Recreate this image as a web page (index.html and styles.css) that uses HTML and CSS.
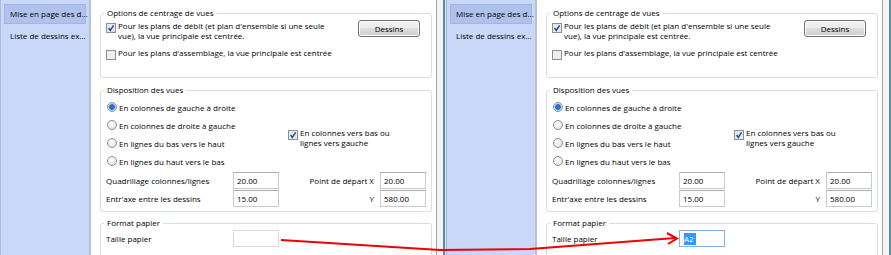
FILE: index.html
```html
<!DOCTYPE html>
<html lang="fr">
<head>
    <meta charset="UTF-8">
    <title>Mise en page des dessins</title>
    <link rel="stylesheet" href="styles.css">
</head>
<body>
<div class="screens">

    <!-- before -->
    <div class="window">
        <div class="sidebar">
            <div class="nav-item active">Mise en page des d...</div>
            <div class="nav-item">Liste de dessins ex...</div>
        </div>
        <div class="main">
            <fieldset class="group">
                <legend>Options de centrage de vues</legend>
                <div class="center-body">
                    <div class="checks">
                        <div class="check-row">
                            <svg class="box" viewBox="0 0 10 10"><rect x="0.5" y="0.5" width="9" height="9" fill="#e4e9f0" stroke="#8e8f8f"/><path d="M2.6 5 L4.3 7.4 L7.6 2.4" fill="none" stroke="#23468c" stroke-width="1.4"/></svg>
                            <span>Pour les plans de débit (et plan d'ensemble si une seule<br>vue), la vue principale est centrée.</span>
                        </div>
                        <div class="check-row second">
                            <svg class="box" viewBox="0 0 10 10"><rect x="0.5" y="0.5" width="9" height="9" fill="#eeeeee" stroke="#8e8f8f"/></svg>
                            <span>Pour les plans d'assemblage, la vue principale est centrée</span>
                        </div>
                    </div>
                    <button class="btn">Dessins</button>
                </div>
            </fieldset>

            <fieldset class="group layout">
                <legend>Disposition des vues</legend>
                <div class="radio-grid">
                    <div class="radio-row"><span class="radio on"></span>En colonnes de gauche à droite</div>
                    <div class="radio-row"><span class="radio"></span>En colonnes de droite à gauche</div>
                    <div class="radio-row"><span class="radio"></span>En lignes du bas vers le haut</div>
                    <div class="radio-row"><span class="radio"></span>En lignes du haut vers le bas</div>
                    <div class="check-row side">
                        <svg class="box" viewBox="0 0 10 10"><rect x="0.5" y="0.5" width="9" height="9" fill="#e4e9f0" stroke="#8e8f8f"/><path d="M2.6 5 L4.3 7.4 L7.6 2.4" fill="none" stroke="#23468c" stroke-width="1.4"/></svg>
                        <span>En colonnes vers bas ou<br>lignes vers gauche</span>
                    </div>
                </div>
                <div class="fields">
                    <span class="lbl">Quadrillage colonnes/lignes</span>
                    <span class="field">20.00</span>
                    <span class="lbl right">Point de départ X</span>
                    <span class="field">20.00</span>
                    <span class="lbl">Entr'axe entre les dessins</span>
                    <span class="field">15.00</span>
                    <span class="lbl right">Y</span>
                    <span class="field">580.00</span>
                </div>
            </fieldset>

            <fieldset class="group paper">
                <legend>Format papier</legend>
                <div class="fields">
                    <span class="lbl">Taille papier</span>
                    <span class="field empty"></span>
                </div>
            </fieldset>
        </div>
        <div class="frame"></div>
    </div>

    <!-- after -->
    <div class="window">
        <div class="sidebar">
            <div class="nav-item active">Mise en page des d...</div>
            <div class="nav-item">Liste de dessins ex...</div>
        </div>
        <div class="main">
            <fieldset class="group">
                <legend>Options de centrage de vues</legend>
                <div class="center-body">
                    <div class="checks">
                        <div class="check-row">
                            <svg class="box" viewBox="0 0 10 10"><rect x="0.5" y="0.5" width="9" height="9" fill="#e4e9f0" stroke="#8e8f8f"/><path d="M2.6 5 L4.3 7.4 L7.6 2.4" fill="none" stroke="#23468c" stroke-width="1.4"/></svg>
                            <span>Pour les plans de débit (et plan d'ensemble si une seule<br>vue), la vue principale est centrée.</span>
                        </div>
                        <div class="check-row second">
                            <svg class="box" viewBox="0 0 10 10"><rect x="0.5" y="0.5" width="9" height="9" fill="#eeeeee" stroke="#8e8f8f"/></svg>
                            <span>Pour les plans d'assemblage, la vue principale est centrée</span>
                        </div>
                    </div>
                    <button class="btn">Dessins</button>
                </div>
            </fieldset>

            <fieldset class="group layout">
                <legend>Disposition des vues</legend>
                <div class="radio-grid">
                    <div class="radio-row"><span class="radio on"></span>En colonnes de gauche à droite</div>
                    <div class="radio-row"><span class="radio"></span>En colonnes de droite à gauche</div>
                    <div class="radio-row"><span class="radio"></span>En lignes du bas vers le haut</div>
                    <div class="radio-row"><span class="radio"></span>En lignes du haut vers le bas</div>
                    <div class="check-row side">
                        <svg class="box" viewBox="0 0 10 10"><rect x="0.5" y="0.5" width="9" height="9" fill="#e4e9f0" stroke="#8e8f8f"/><path d="M2.6 5 L4.3 7.4 L7.6 2.4" fill="none" stroke="#23468c" stroke-width="1.4"/></svg>
                        <span>En colonnes vers bas ou<br>lignes vers gauche</span>
                    </div>
                </div>
                <div class="fields">
                    <span class="lbl">Quadrillage colonnes/lignes</span>
                    <span class="field">20.00</span>
                    <span class="lbl right">Point de départ X</span>
                    <span class="field">20.00</span>
                    <span class="lbl">Entr'axe entre les dessins</span>
                    <span class="field">15.00</span>
                    <span class="lbl right">Y</span>
                    <span class="field">580.00</span>
                </div>
            </fieldset>

            <fieldset class="group paper">
                <legend>Format papier</legend>
                <div class="fields">
                    <span class="lbl">Taille papier</span>
                    <span class="field focus"><span class="sel">A2</span></span>
                </div>
            </fieldset>
        </div>
        <div class="frame"></div>
    </div>

    <!-- red annotation arrow -->
    <svg class="arrow" width="891" height="255" viewBox="0 0 891 255">
        <polyline points="281,240 440,250 530,249 675,238" fill="none" stroke="#f00000" stroke-width="2"/>
        <polyline points="667,233 677,238.5 668,244" fill="none" stroke="#f00000" stroke-width="2"/>
    </svg>
</div>
</body>
</html>
```

FILE: styles.css
```css
body {
    margin: 0;
    width: 891px;
    height: 255px;
    overflow: hidden;
    font-family: "Open Sans", "Segoe UI", sans-serif;
    font-size: 8px;
    color: #000000;
    background: #ffffff;
}
.screens {
    position: relative;
    display: flex;
    height: 255px;
}
.window {
    flex: 0 0 446px;
    display: flex;
    height: 255px;
}

/* left navigation */
.sidebar {
    box-sizing: border-box;
    width: 91px;
    padding: 4px 3px 0 3px;
    background: #c9d8f8;
    border-left: 1px solid #a8badf;
    border-right: 2px solid #b7c1cf;
}
.nav-item {
    height: 20px;
    line-height: 20px;
    padding-left: 6px;
    margin-bottom: 2px;
    white-space: nowrap;
}
.nav-item.active {
    background: #afc2ec;
    box-shadow: inset 0 0 0 1px #a2b6e2;
}

/* content area */
.main {
    box-sizing: border-box;
    width: 345px;
    padding-top: 7px;
    background: #ffffff;
}
.frame {
    width: 10px;
    background: linear-gradient(to right, #a3a3a3 0 1px, #f4f4f4 1px 7px, #5c8ea8 7px 9px, #d8e3f1 9px 10px);
}

.group {
    margin: 0 4px 0 9px;
    padding: 0 0 0 5px;
    border: 1px solid #d5dfe5;
    border-radius: 3px;
}
.group legend {
    margin-left: -2px;
    padding: 0 3px;
    line-height: 12px;
}
.group.layout {
    margin-top: 6px;
    padding-bottom: 4px;
}
.group.paper {
    margin-top: 5px;
    padding-bottom: 10px;
}

.center-body {
    display: flex;
    justify-content: space-between;
    align-items: flex-start;
    height: 58px;
}
.check-row {
    display: flex;
    align-items: flex-start;
    line-height: 10px;
    margin-top: 2px;
    white-space: nowrap;
}
.check-row.second {
    margin-top: 7px;
}
.box {
    flex: none;
    width: 10px;
    height: 10px;
    margin: 2px 2px 0 0;
}
.btn {
    width: 62px;
    height: 17px;
    margin: 1px 11px 0 0;
    padding: 0;
    font: inherit;
    color: #000000;
    border: 1px solid #707070;
    border-radius: 3px;
    background: linear-gradient(#f2f2f2, #ebebeb 50%, #dddddd 50%, #cfcfcf);
    box-shadow: inset 0 0 0 1px #fcfcfc;
}

/* Disposition des vues */
.radio-grid {
    display: grid;
    grid-template-columns: 182px 1fr;
    grid-auto-rows: 18px;
    margin-top: 2px;
}
.radio-row {
    grid-column: 1;
    display: flex;
    align-items: center;
    white-space: nowrap;
}
.radio {
    box-sizing: border-box;
    width: 10px;
    height: 10px;
    margin: 0 2px 0 1px;
    border: 1px solid #8f8f8f;
    border-radius: 50%;
    background: radial-gradient(circle at 40% 35%, #ffffff, #dcdcdc);
}
.radio.on {
    background: radial-gradient(circle, #2c6fc4 0 2.5px, #8fb6e6 3px, #e6eef8 4px);
}
.check-row.side {
    grid-column: 2;
    grid-row: 2 / span 2;
    margin-top: 12px;
}

.fields {
    display: grid;
    grid-template-columns: 127px 46px 101px 46px;
    grid-auto-rows: 17px;
    row-gap: 1px;
    align-items: center;
    margin-top: 2px;
}
.paper .fields {
    margin-top: 1px;
}
.lbl {
    white-space: nowrap;
}
.lbl.right {
    text-align: right;
    padding-right: 6px;
}
.field {
    box-sizing: border-box;
    height: 17px;
    line-height: 15px;
    padding-left: 3px;
    border: 1px solid #c8cbd0;
    border-top-color: #abadb3;
    background: #ffffff;
}
.field.empty {
    border-color: #dadada;
}
.field.focus {
    border-color: #7fb2e5;
    padding-left: 4px;
}
.sel {
    display: inline-block;
    line-height: 12px;
    padding: 0 2px 0 0;
    background: #3399ff;
    color: #ffffff;
}

.arrow {
    position: absolute;
    left: 0;
    top: 0;
    pointer-events: none;
}
```
